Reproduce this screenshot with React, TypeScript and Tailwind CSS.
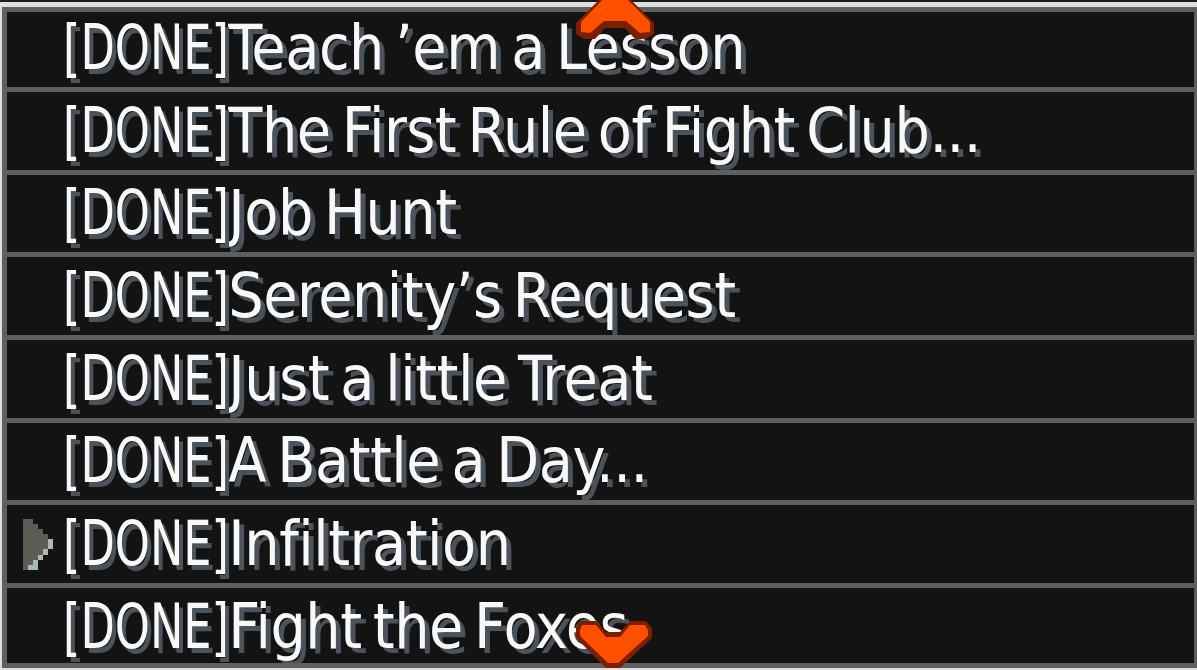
import React from "react";

const quests = [
  "Teach ’em a Lesson",
  "The First Rule of Fight Club...",
  "Job Hunt",
  "Serenity’s Request",
  "Just a little Treat",
  "A Battle a Day...",
  "Infiltration",
  "Fight the Foxes",
];

const SELECTED = 6;

function Cursor() {
  return (
    <svg width="30" height="51" viewBox="23 518 30 51" shapeRendering="crispEdges">
      <polygon
        fill="#5c5c55"
        points="23,518 33,518 33,523 38,523 38,528 43,528 43,533 48,533 48,548 43,548 43,554 38,554 38,559 33,559 33,564 28,564 28,569 23,569"
      />
      <g fill="#a9b8b8">
        <rect x="48" y="538" width="5" height="10" />
        <rect x="43" y="548" width="5" height="6" />
        <rect x="38" y="554" width="5" height="5" />
        <rect x="33" y="559" width="5" height="5" />
        <rect x="28" y="564" width="10" height="5" />
      </g>
    </svg>
  );
}

function UpArrow() {
  return (
    <svg
      className="absolute left-[574px] top-0"
      width="82"
      height="42"
      viewBox="574 0 82 42"
    >
      <polygon
        fill="#7a1f00"
        points="603,-4 627,-4 654,23 654,34 646,39 635,39 625,28 605,28 595,39 584,39 576,34 576,23"
      />
      <polygon
        fill="#ff5000"
        points="606,-4 624,-4 650,22 650,32 640,33 626,21 604,21 590,33 581,32 581,22"
      />
    </svg>
  );
}

function DownArrow() {
  return (
    <svg
      className="absolute left-[574px] top-[618px]"
      width="82"
      height="52"
      viewBox="574 618 82 52"
    >
      <polygon
        fill="#7a1f00"
        points="580,621 596,621 606,632 620,632 630,621 646,621 652,628 652,638 620,668 606,668 576,638 576,628"
      />
      <polygon
        fill="#ff5000"
        points="582,625 596,625 606,637 620,637 630,625 645,625 648,630 648,636 618,663 608,663 580,636 580,630"
      />
    </svg>
  );
}

export default function App() {
  return (
    <div className="relative h-[670px] w-[1197px] overflow-hidden bg-[#1c1c1c]">
      <div className="ml-[-3px] mt-[2px] h-[671px] w-[1207px] border-[5px] border-[#dedede] bg-[#5f5f5f] p-[5px]">
        <div className="h-[651px] w-[1187px] overflow-hidden">
          <div className="mt-[-2.67px] flex flex-col gap-[5px]">
            {quests.map((q, i) => (
              <div
                key={q}
                className="flex h-[77.67px] shrink-0 items-center bg-[#131313] pl-[16px]"
              >
                <div className="flex w-[40px] shrink-0 items-center">
                  {i === SELECTED && <Cursor />}
                </div>
                <span className="flex items-center whitespace-nowrap font-['Liberation_Sans_Narrow','DejaVu_Sans_Condensed','Liberation_Sans',sans-serif] text-[62px] leading-none text-[#f8f8f8] [text-shadow:5px_5px_0_#4a535b]">
                  <span className="mr-[-42px] inline-block origin-left scale-x-[0.8]">[DONE]</span>
                  <span className="tracking-[-0.5px] [word-spacing:-6px]">{q}</span>
                </span>
              </div>
            ))}
          </div>
        </div>
      </div>
      <UpArrow />
      <DownArrow />
    </div>
  );
}
